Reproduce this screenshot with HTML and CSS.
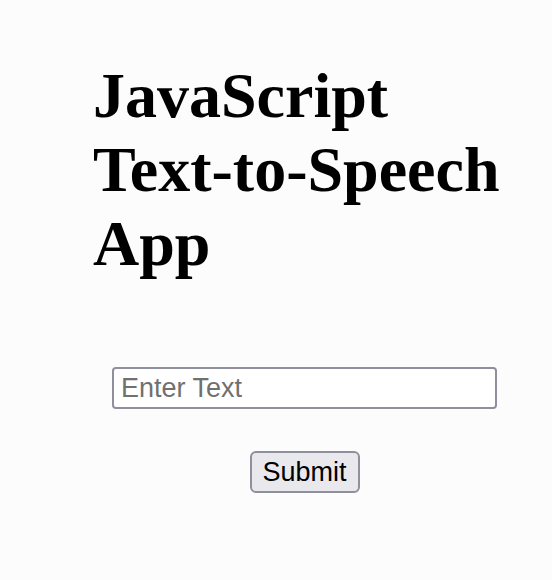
FILE: index.html
```html
<!DOCTYPE html>
<html>
<head>
<meta charset="utf-8">
<title>JavaScript Text-to-Speech App</title>
<link rel="stylesheet" href="styles.css">
</head>
<body>
<main class="app">
  <h1 class="title">JavaScript<br>Text-to-Speech<br>App</h1>
  <form class="form">
    <input class="text-input" type="text" placeholder="Enter Text">
    <button class="submit" type="button">Submit</button>
  </form>
</main>
</body>
</html>
```
FILE: styles.css
```css
html, body {
  margin: 0;
  padding: 0;
  background: #fcfcfc;
}
.app {
  display: flex;
  flex-direction: column;
  padding: 59px 0 0 93px;
}
.title {
  margin: 0;
  font-family: "Liberation Serif", "Times New Roman", serif;
  font-weight: bold;
  font-size: 64px;
  line-height: 74px;
  color: #000;
}
.form {
  display: flex;
  flex-direction: column;
  align-items: center;
  gap: 42px;
  width: 385px;
  margin: 86px 0 0 19px;
}
.text-input {
  box-sizing: border-box;
  width: 385px;
  height: 42px;
  padding: 0 7px;
  border: 2px solid #8f8f9d;
  border-radius: 4px;
  background: #fff;
  font-family: "Liberation Sans", Arial, sans-serif;
  font-size: 27px;
  color: #000;
}
.text-input::placeholder {
  color: #707070;
}
.submit {
  box-sizing: border-box;
  width: 110px;
  height: 42px;
  padding: 0;
  border: 2px solid #8f8f9d;
  border-radius: 6px;
  background: #e9e9ed;
  font-family: "Liberation Sans", Arial, sans-serif;
  font-size: 27px;
  color: #000;
}
```
